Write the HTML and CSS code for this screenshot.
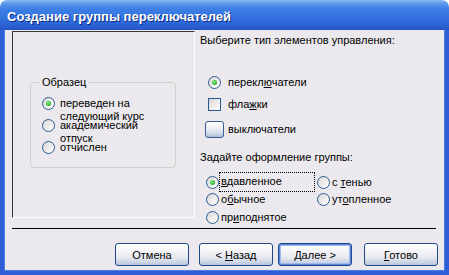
FILE: index.html
```html
<!DOCTYPE html>
<html lang="ru">
<head>
<meta charset="utf-8">
<title>Создание группы переключателей</title>
<link rel="stylesheet" href="styles.css">
</head>
<body>
<div class="window">
  <div class="titlebar"><span class="title">Создание группы переключателей</span></div>
  <div class="frame">
    <div class="main">
      <div class="preview">
        <div class="sample">
          <span class="legend">Образец</span>
          <div class="opts">
            <div class="opt"><span class="radio on"></span><span class="otxt">переведен на<br>следующий курс</span></div>
            <div class="opt"><span class="radio"></span><span class="otxt">академический<br>отпуск</span></div>
            <div class="opt"><span class="radio"></span><span class="otxt">отчислен</span></div>
          </div>
        </div>
      </div>
      <div class="settings">
        <div class="label">Выберите тип элементов управления:</div>
        <div class="types">
          <div class="type"><span class="ico"><span class="radio on"></span></span><span>перекл<u>ю</u>чатели</span></div>
          <div class="type"><span class="ico"><span class="check"></span></span><span>фла<u>ж</u>ки</span></div>
          <div class="type t3"><span class="ico"><span class="toggle"></span></span><span>выключатели</span></div>
        </div>
        <div class="label label2">Задайте оформление группы:</div>
        <div class="styles">
          <div class="sty"><span class="radio on"></span><span class="focus"><u>в</u>давленное</span></div>
          <div class="sty"><span class="radio"></span><span class="stxt">с <u>т</u>енью</span></div>
          <div class="sty"><span class="radio"></span><span class="stxt">о<u>б</u>ычное</span></div>
          <div class="sty"><span class="radio"></span><span class="stxt">ут<u>о</u>пленное</span></div>
          <div class="sty last"><span class="radio"></span><span class="stxt">пр<u>и</u>поднятое</span></div>
        </div>
      </div>
    </div>
    <div class="sep"></div>
    <div class="buttons">
      <button class="btn">Отмена</button>
      <button class="btn back">&lt; <u>Н</u>азад</button>
      <button class="btn next"><u>Д</u>алее &gt;</button>
      <button class="btn done"><u>Г</u>отово</button>
    </div>
  </div>
</div>
</body>
</html>
```

FILE: styles.css
```css
* { box-sizing: border-box; }
html, body { margin: 0; padding: 0; background: #ffffff; }
body {
  width: 449px;
  height: 275px;
  font-family: "Liberation Sans", "DejaVu Sans", sans-serif;
  font-size: 11px;
  color: #000;
}
.window {
  width: 449px;
  height: 275px;
  display: flex;
  flex-direction: column;
}
.titlebar {
  height: 30px;
  flex: none;
  border-radius: 7px 7px 0 0;
  background: linear-gradient(to bottom, #8cbaf4 0%, #5d98ec 12%, #3e7fe6 30%, #3574e0 55%, #2d64d6 80%, #2654c6 100%);
  display: flex;
  align-items: center;
  padding: 0 0 0 7px;
}
.title {
  color: #fff;
  font-family: "Liberation Sans", "DejaVu Sans", sans-serif;
  font-weight: bold;
  font-size: 13px;
  letter-spacing: 0;
  text-shadow: 1px 1px 0 #0c2a82;
  margin-top: 2px;
}
.frame {
  flex: 1;
  background: #ebe9ed;
  border-left: 4px solid #2e5fd6;
  border-right: 4px solid #2e5fd6;
  border-bottom: 4px solid #2e5fd6;
  box-shadow: inset 1px 0 0 #4a7de4, inset -1px 0 0 #4a7de4, inset 0 -1px 0 #4a7de4;
  display: flex;
  flex-direction: column;
  padding: 1px 0 0 8px;
}
.main { display: flex; height: 187px; }
.preview {
  width: 183px;
  height: 187px;
  border-top: 1px solid #3a3a3a;
  border-left: 1px solid #3a3a3a;
  border-right: 1px solid #ffffff;
  border-bottom: 1px solid #ffffff;
  padding: 50px 0 0 17px;
}
.sample {
  position: relative;
  width: 146px;
  height: 86px;
  border: 1px solid #d0d0c8;
  border-radius: 4px;
}
.legend {
  position: absolute;
  top: -7px;
  left: 9px;
  padding: 0 2px;
  line-height: 13px;
  background: #ebe9ed;
}
.opts { padding: 14px 0 0 11px; }
.opt {
  display: flex;
  align-items: flex-start;
  height: 22px;
  gap: 5px;
}
.otxt { line-height: 12.5px; white-space: nowrap; }
.radio {
  display: inline-block;
  flex: none;
  width: 13px;
  height: 13px;
  border-radius: 50%;
  border: 1px solid #2a5b90;
  background: linear-gradient(135deg, #d6d4d2 0%, #ebeae8 45%, #ffffff 100%);
  position: relative;
}
.radio.on::after {
  content: "";
  position: absolute;
  left: 3px;
  top: 3px;
  width: 5px;
  height: 5px;
  border-radius: 50%;
  background: radial-gradient(circle at 40% 40%, #8cf08c 0%, #3fbf3f 50%, #1f941f 100%);
}
.settings {
  padding: 3px 0 0 5px;
  display: flex;
  flex-direction: column;
}
.label { line-height: 13px; }
.types { margin-top: 24px; }
.type {
  display: flex;
  align-items: center;
  height: 22px;
}
.type.t3 { margin-top: 3px; }
.ico {
  width: 28px;
  display: flex;
  justify-content: center;
}
.check {
  display: inline-block;
  width: 13px;
  height: 13px;
  border: 1px solid #2a5b90;
  background: linear-gradient(135deg, #d6d4d2 0%, #ebeae8 45%, #ffffff 100%);
}
.toggle {
  display: inline-block;
  width: 19px;
  height: 17px;
  border: 1px solid #3a5c94;
  border-radius: 3px;
  background: linear-gradient(to bottom, #ffffff 0%, #f2f2f4 35%, #d4dcea 75%, #a9b9d6 100%);
}
.label2 { margin-top: 11px; }
.styles {
  margin-top: 9px;
  display: grid;
  grid-template-columns: 111px auto;
  grid-template-rows: 18px 16px 20px;
  padding-left: 6px;
}
.sty {
  display: flex;
  align-items: center;
  white-space: nowrap;
}
.sty .radio { margin-right: 2px; }
.sty.last { align-items: flex-start; padding-top: 4px; }
.stxt { line-height: 13px; }
.focus {
  line-height: 13px;
  outline: 1px dotted #000;
  padding: 2px 0 3px 1px;
  width: 94px;
  margin-left: -1px;
}
.sep {
  height: 1px;
  background: #000;
  margin: 10px 9px 0 0;
}
.buttons {
  display: flex;
  justify-content: flex-end;
  padding: 14px 7px 0 0;
}
.btn {
  width: 74px;
  height: 23px;
  padding: 0;
  font-family: inherit;
  font-size: 11px;
  color: #000;
  border: 1px solid #1e4a86;
  border-radius: 3px;
  background: linear-gradient(to bottom, #ffffff 0%, #f6f6f8 30%, #e6e8ef 65%, #c8d2e4 90%, #b2c0da 100%);
}
.btn.back { margin-left: 10px; }
.btn.next {
  margin-left: 5px;
  box-shadow: inset 0 0 0 1px #5d84dc, inset 0 0 0 2px #9cb8ee;
}
.btn.done { margin-left: 12px; }
u { text-decoration: underline; text-underline-offset: 1px; }
```
